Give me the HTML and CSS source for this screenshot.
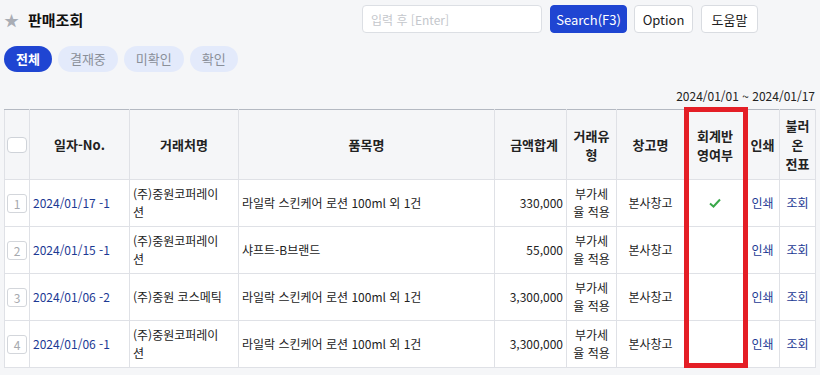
FILE: index.html
```html
<!DOCTYPE html>
<html lang="ko">
<head>
	<meta charset="UTF-8">
	<title>판매조회</title>
	<link rel="stylesheet" href="styles.css">
</head>
<body>
	<div id="main_frame">
		<div class="top_bar">
			<div class="title">
				<span class="star">&#9733;</span>
				<h1>판매조회</h1>
			</div>
			<div class="controls">
				<input class="search_input" type="text" placeholder="입력 후 [Enter]">
				<button class="btn btn_blue">Search(F3)</button>
				<button class="btn btn_opt">Option</button>
				<button class="btn btn_help">도움말</button>
			</div>
		</div>

		<div class="tabs">
			<span class="tab on">전체</span>
			<span class="tab">결재중</span>
			<span class="tab">미확인</span>
			<span class="tab">확인</span>
		</div>

		<div class="period">2024/01/01 ~ 2024/01/17</div>

		<div class="grid_wrap">
			<table class="grid">
				<colgroup>
					<col style="width:25px">
					<col style="width:100px">
					<col style="width:109px">
					<col style="width:256px">
					<col style="width:72px">
					<col style="width:50px">
					<col style="width:68px">
					<col style="width:61px">
					<col style="width:34px">
					<col style="width:36px">
				</colgroup>
				<thead>
					<tr>
						<th><span class="chk"></span></th>
						<th>일자-No.</th>
						<th>거래처명</th>
						<th>품목명</th>
						<th class="num_head">금액합계</th>
						<th>거래유<br>형</th>
						<th>창고명</th>
						<th>회계반<br>영여부</th>
						<th>인쇄</th>
						<th>불러<br>온<br>전표</th>
					</tr>
				</thead>
				<tbody>
					<tr>
						<td><span class="row_no">1</span></td>
						<td><a href="#">2024/01/17 -1</a></td>
						<td>(주)중원코퍼레이<br>션</td>
						<td>라일락 스킨케어 로션 100ml 외 1건</td>
						<td class="amount">330,000</td>
						<td class="center">부가세<br>율 적용</td>
						<td class="center">본사창고</td>
						<td class="center">
							<svg class="check" width="12" height="10" viewBox="0 0 12 10"><path d="M1 5.5 L4.5 8.5 L11 1.5" fill="none" stroke="#3aa84a" stroke-width="2"/></svg>
						</td>
						<td class="center"><a href="#">인쇄</a></td>
						<td class="center"><a href="#">조회</a></td>
					</tr>
					<tr>
						<td><span class="row_no">2</span></td>
						<td><a href="#">2024/01/15 -1</a></td>
						<td>(주)중원코퍼레이<br>션</td>
						<td>샤프트-B브랜드</td>
						<td class="amount">55,000</td>
						<td class="center">부가세<br>율 적용</td>
						<td class="center">본사창고</td>
						<td></td>
						<td class="center"><a href="#">인쇄</a></td>
						<td class="center"><a href="#">조회</a></td>
					</tr>
					<tr>
						<td><span class="row_no">3</span></td>
						<td><a href="#">2024/01/06 -2</a></td>
						<td>(주)중원 코스메틱</td>
						<td>라일락 스킨케어 로션 100ml 외 1건</td>
						<td class="amount">3,300,000</td>
						<td class="center">부가세<br>율 적용</td>
						<td class="center">본사창고</td>
						<td></td>
						<td class="center"><a href="#">인쇄</a></td>
						<td class="center"><a href="#">조회</a></td>
					</tr>
					<tr>
						<td><span class="row_no">4</span></td>
						<td><a href="#">2024/01/06 -1</a></td>
						<td>(주)중원코퍼레이<br>션</td>
						<td>라일락 스킨케어 로션 100ml 외 1건</td>
						<td class="amount">3,300,000</td>
						<td class="center">부가세<br>율 적용</td>
						<td class="center">본사창고</td>
						<td></td>
						<td class="center"><a href="#">인쇄</a></td>
						<td class="center"><a href="#">조회</a></td>
					</tr>
				</tbody>
			</table>
			<div class="highlight"></div>
		</div>
	</div>
</body>
</html>
```

FILE: styles.css
```css
* {
	margin: 0;
	padding: 0;
	box-sizing: border-box;
}

body {
	background-color: #f5f6f8;
	font-family: "Noto Sans CJK KR", "Noto Sans", sans-serif;
	font-size: 12px;
	color: #222;
}

#main_frame {
	padding: 5px 5px 0 4px;
}

.top_bar {
	display: flex;
	align-items: center;
	height: 28px;
}

.title {
	display: flex;
	align-items: center;
	flex: 1;
}
.star {
	color: #a9adb5;
	font-size: 15px;
	width: 24px;
}
.title h1 {
	font-size: 15px;
	font-weight: bold;
	color: #111;
}

.controls {
	display: flex;
	gap: 7px;
	margin-right: 57px;
}
.search_input {
	width: 180px;
	height: 28px;
	border: 1px solid #dcdfe4;
	border-radius: 4px;
	padding: 0 8px;
	font-family: inherit;
	font-size: 12px;
	background: #fff;
	margin-right: 1px;
}
.search_input::placeholder {
	color: #c4c7cc;
}
.btn {
	height: 28px;
	padding: 0;
	border: 1px solid #d9dce1;
	border-radius: 4px;
	background: #fff;
	font-family: inherit;
	font-size: 13px;
	color: #222;
}
.btn_blue {
	background: #1f45d2;
	border-color: #1f45d2;
	color: #fff;
	width: 77px;
}
.btn_opt {
	width: 59px;
}
.btn_help {
	width: 57px;
	margin-left: 1px;
}

.tabs {
	display: flex;
	gap: 6px;
	margin-top: 13px;
}
.tab {
	height: 26px;
	line-height: 26px;
	padding: 0 12px;
	border-radius: 13px;
	background: #e3eafb;
	color: #8a8f99;
	font-size: 13px;
}
.tab.on {
	background: #1f45d2;
	color: #fff;
	font-weight: bold;
}

.period {
	text-align: right;
	margin-top: 15px;
	font-size: 12px;
	color: #222;
	height: 18px;
	line-height: 18px;
}

.grid_wrap {
	position: relative;
	margin-top: 4px;
	width: 811px;
}

.grid {
	width: 811px;
	border-collapse: collapse;
	table-layout: fixed;
	border-top: 1px solid #b4b9c2;
}
.grid th,
.grid td {
	border: 1px solid #dfe1e6;
	vertical-align: middle;
}
.grid th {
	height: 70px;
	background: #f5f6f8;
	font-size: 13px;
	font-weight: bold;
	line-height: 19px;
	text-align: center;
	border-top: 1px solid #b4b9c2;
}
.grid th.num_head {
	text-align: right;
	padding-right: 8px;
}
.grid td {
	height: 47px;
	background: #fff;
	padding: 0 3px;
	line-height: 18px;
	font-size: 12px;
}
.grid td.center {
	text-align: center;
	padding: 0;
}
.grid td.amount {
	text-align: right;
	padding-right: 3px;
}
.grid a {
	color: #1c3a94;
	text-decoration: none;
}

.chk {
	display: block;
	width: 20px;
	height: 16px;
	margin: 0 auto;
	background: #fff;
	border: 1px solid #cfd3d9;
	border-radius: 4px;
}
.row_no {
	display: block;
	width: 20px;
	height: 19px;
	line-height: 17px;
	text-align: center;
	color: #a6a9ae;
	border: 1px solid #d3d6db;
	border-radius: 3px;
	font-size: 12px;
}
.grid td:first-child {
	padding: 0 0 0 2px;
}

.check {
	display: block;
	margin: 0 auto;
}

.highlight {
	position: absolute;
	left: 680px;
	top: -2px;
	width: 64px;
	height: 261px;
	border: 5px solid #e41e26;
	pointer-events: none;
}
```
